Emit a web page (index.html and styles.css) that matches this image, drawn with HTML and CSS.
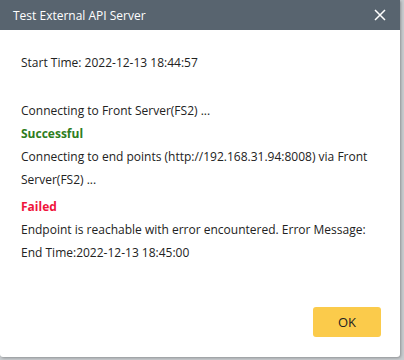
FILE: index.html
```html
<!DOCTYPE html>
<html>
<head>
<meta charset="utf-8">
<link rel="stylesheet" href="styles.css">
</head>
<body>
<div class="dialog">
  <div class="header">
    <span class="title">Test External API Server</span>
    <svg class="close" width="12" height="12" viewBox="0 0 12 12"><path d="M1 1L11 11M11 1L1 11" stroke="#fff" stroke-width="1.5"/></svg>
  </div>
  <div class="content">
    <p class="line start">Start Time: 2022-12-13 18:44:57</p>
    <p class="line gap">Connecting to Front Server(FS2) ...</p>
    <p class="line ok">Successful</p>
    <p class="line">Connecting to end points (http://192.168.31.94:8008) via Front Server(FS2) ...</p>
    <p class="line fail">Failed</p>
    <p class="line">Endpoint is reachable with error encountered. Error Message:</p>
    <p class="line">End Time:2022-12-13 18:45:00</p>
  </div>
  <div class="footer">
    <button class="btn">OK</button>
  </div>
</div>
</body>
</html>
```
FILE: styles.css
```css
html, body { margin: 0; padding: 0; }
body {
  width: 404px;
  height: 360px;
  background: #c9cdd0;
  font-family: "Open Sans", "Noto Sans", sans-serif;
  overflow: hidden;
}
.dialog {
  width: 400px;
  height: 357px;
  background: #fff;
  display: flex;
  flex-direction: column;
  box-shadow: 1px 1px 3px rgba(0,0,0,0.3);
  border-radius: 0 0 3px 3px;
}
.header {
  height: 30px;
  background: #58646f;
  display: flex;
  align-items: center;
  justify-content: space-between;
  padding: 0 13px 0 13px;
}
.title {
  color: #fff;
  font-size: 12px;
}
.close { margin-right: 1px; }
.content {
  flex: 1;
  padding: 21px 8px 0 21px;
  color: #222;
  font-size: 12px;
}
.line {
  margin: 0;
  line-height: 23px;
}
.gap { margin-top: 25px; }
.ok { color: #2e7d1e; font-weight: bold; }
.fail { color: #f0143c; font-weight: bold; margin-top: 4px; }
.footer {
  display: flex;
  justify-content: flex-end;
  padding: 0 19px 20px 0;
}
.btn {
  width: 68px;
  height: 30px;
  border: none;
  border-radius: 3px;
  background: #fbcb4b;
  color: #222;
  font-family: "Open Sans", "Noto Sans", sans-serif;
  font-size: 13px;
  padding: 0;
}
```
